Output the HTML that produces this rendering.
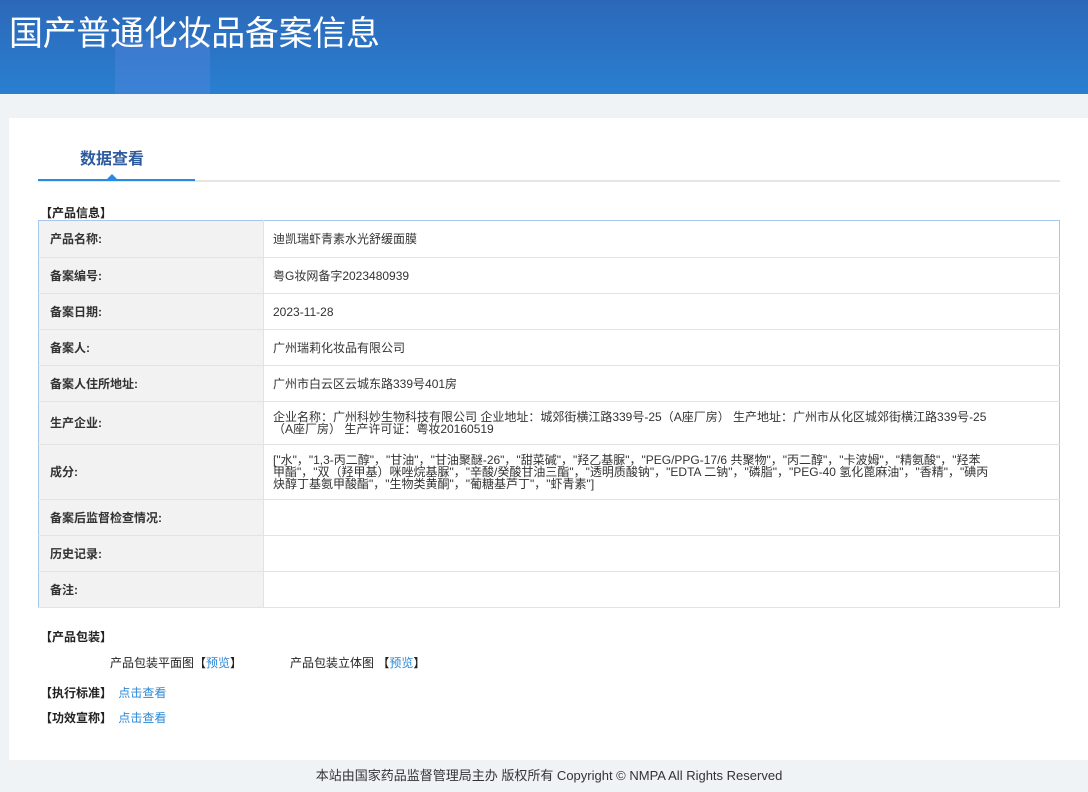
<!DOCTYPE html>
<html><head><meta charset="utf-8"><style>
*{margin:0;padding:0;box-sizing:border-box}
body{width:1088px;height:792px;background:#f0f3f6;font-family:"Liberation Sans","Noto Sans CJK SC",sans-serif;position:relative;overflow:hidden;color:#333}
.hd{position:absolute;left:0;top:0;width:1088px;height:94px;background:linear-gradient(180deg,#2c68b9 0%,#2a7fd0 100%);overflow:hidden}
.hd h1{position:absolute;left:9px;top:6px;color:#fff;font-size:34px;font-weight:normal;letter-spacing:-0.3px}
.panel{position:absolute;left:9px;top:118px;width:1079px;height:642px;background:#fff}
.tab{position:absolute;left:80px;top:145px;font-size:16px;font-weight:bold;color:#2d5b9e}
.line{position:absolute;left:38px;top:180px;width:1022px;height:2px;background:#e5e5e5}
.line2{position:absolute;left:38px;top:179px;width:157px;height:2px;background:#2a8ae0}
.tri{position:absolute;left:106px;top:174px;width:0;height:0;border-left:6px solid transparent;border-right:6px solid transparent;border-bottom:6px solid #2a8ae0}
.sec{position:absolute;font-size:12px;font-weight:bold;color:#222}
table{position:absolute;left:38px;top:220px;width:1022px;border-collapse:collapse;border:1px solid #a9c7ec;font-size:12px}
td{border-bottom:1px solid #e3e3e3;height:36px;padding:0 9px;vertical-align:middle;line-height:12px;color:#333}
td.l{width:225px;background:#f2f2f2;font-weight:bold;color:#333;border-right:1px solid #e3e3e3;padding:0 11px}
a{color:#2a88d8;text-decoration:none}
.t{position:absolute;font-size:12px;color:#222}
.ft{position:absolute;top:765px;left:0;width:1098px;text-align:center;font-size:13px;color:#333}
</style></head><body>
<div class="hd">
<div style="position:absolute;left:115px;top:40px;width:95px;height:60px;background:rgba(100,140,230,.3)"></div>
<h1>国产普通化妆品备案信息</h1>
</div>
<div class="panel"></div>
<div class="tab">数据查看</div>
<div class="line"></div><div class="line2"></div><div class="tri"></div>
<div class="sec" style="left:40px;top:204px">【产品信息】</div>
<table>
<tr><td class="l" style="height:37px">产品名称:</td><td>迪凯瑞虾青素水光舒缓面膜</td></tr>
<tr><td class="l">备案编号:</td><td>粤G妆网备字2023480939</td></tr>
<tr><td class="l">备案日期:</td><td>2023-11-28</td></tr>
<tr><td class="l">备案人:</td><td>广州瑞莉化妆品有限公司</td></tr>
<tr><td class="l">备案人住所地址:</td><td>广州市白云区云城东路339号401房</td></tr>
<tr><td class="l" style="height:43px">生产企业:</td><td>企业名称：广州科妙生物科技有限公司 企业地址：城郊街横江路339号-25（A座厂房） 生产地址：广州市从化区城郊街横江路339号-25<br>（A座厂房） 生产许可证：粤妆20160519</td></tr>
<tr><td class="l" style="height:55px">成分:</td><td>["水"，"1,3-丙二醇"，"甘油"，"甘油聚醚-26"，"甜菜碱"，"羟乙基脲"，"PEG/PPG-17/6 共聚物"，"丙二醇"，"卡波姆"，"精氨酸"，"羟苯<br>甲酯"，"双（羟甲基）咪唑烷基脲"，"辛酸/癸酸甘油三酯"，"透明质酸钠"，"EDTA 二钠"，"磷脂"，"PEG-40 氢化蓖麻油"，"香精"，"碘丙<br>炔醇丁基氨甲酸酯"，"生物类黄酮"，"葡糖基芦丁"，"虾青素"]</td></tr>
<tr><td class="l">备案后监督检查情况:</td><td></td></tr>
<tr><td class="l">历史记录:</td><td></td></tr>
<tr><td class="l">备注:</td><td></td></tr>
</table>
<div class="sec" style="left:40px;top:628px">【产品包装】</div>
<div class="t" style="left:110px;top:654px">产品包装平面图【<a>预览</a>】</div>
<div class="t" style="left:290px;top:654px">产品包装立体图 【<a>预览</a>】</div>
<div class="sec" style="left:40px;top:684px">【执行标准】 <a style="font-weight:normal;margin-left:3px">点击查看</a></div>
<div class="sec" style="left:40px;top:709px">【功效宣称】 <a style="font-weight:normal;margin-left:3px">点击查看</a></div>
<div class="ft">本站由国家药品监督管理局主办 版权所有 Copyright © NMPA All Rights Reserved</div>
</body></html>
